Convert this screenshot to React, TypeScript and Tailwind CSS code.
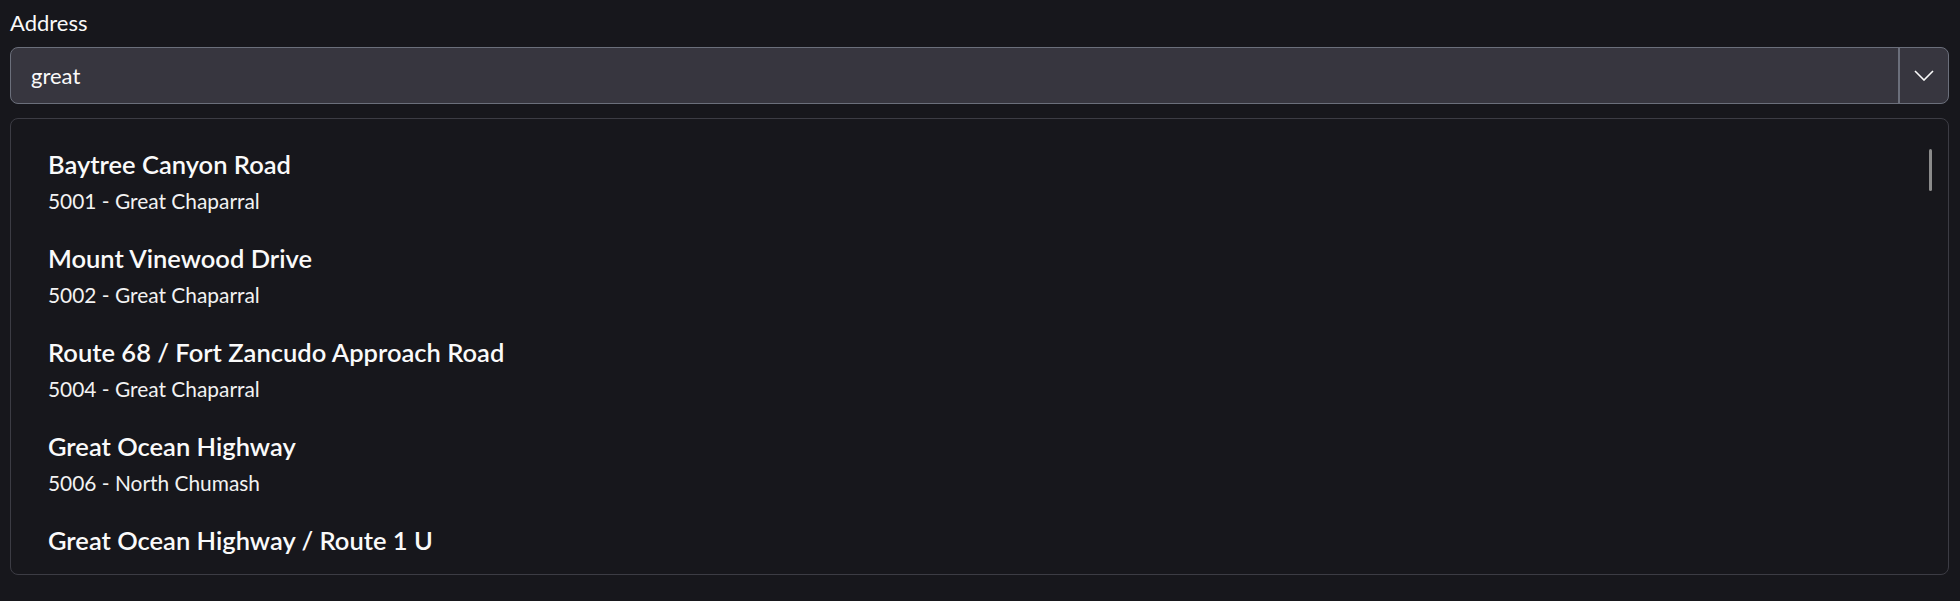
import React from "react";

const items: { t: string; s?: string }[] = [
  { t: "Baytree Canyon Road", s: "5001 - Great Chaparral" },
  { t: "Mount Vinewood Drive", s: "5002 - Great Chaparral" },
  { t: "Route 68 / Fort Zancudo Approach Road", s: "5004 - Great Chaparral" },
  { t: "Great Ocean Highway", s: "5006 - North Chumash" },
  { t: "Great Ocean Highway / Route 1 U" },
];

export default function App() {
  return (
    <div
      className="w-full h-[601px] bg-[#17171c] pl-[10px] pr-[11px] pt-[7px] text-[#fafafa]"
      style={{ fontFamily: "Lato, 'Noto Sans', sans-serif" }}
    >
      <div className="text-[22px] leading-[32px]">Address</div>
      <div className="mt-[8px] flex h-[57px] rounded-[8px] border border-[#6b6f7b] bg-[#37363f]">
        <div className="flex flex-1 items-center pl-[20px] text-[22px]">great</div>
        <div className="flex w-[50px] items-center justify-center border-l-2 border-[#6b6f7b]">
          <svg width="20" height="11" viewBox="0 0 20 11" fill="none">
            <path d="M1 1l9 9 9-9" stroke="#fafafa" strokeWidth="1.6" />
          </svg>
        </div>
      </div>
      <div className="relative mt-[14px] h-[457px] rounded-[8px] border border-[#3c3c44] py-[8px]">
        <div className="h-full overflow-hidden pl-[37px] pt-[19px]">
          {items.map((it) => (
            <div key={it.t} className="h-[94px]">
              <div className="text-[25.5px] font-semibold leading-[36px]">{it.t}</div>
              {it.s && <div className="text-[20.9px] font-normal leading-[38px] text-[#f2f2f2]">{it.s}</div>}
            </div>
          ))}
        </div>
        <div className="absolute right-[16px] top-[30px] h-[42px] w-[3px] rounded bg-[#8b8b8b]" />
      </div>
    </div>
  );
}
